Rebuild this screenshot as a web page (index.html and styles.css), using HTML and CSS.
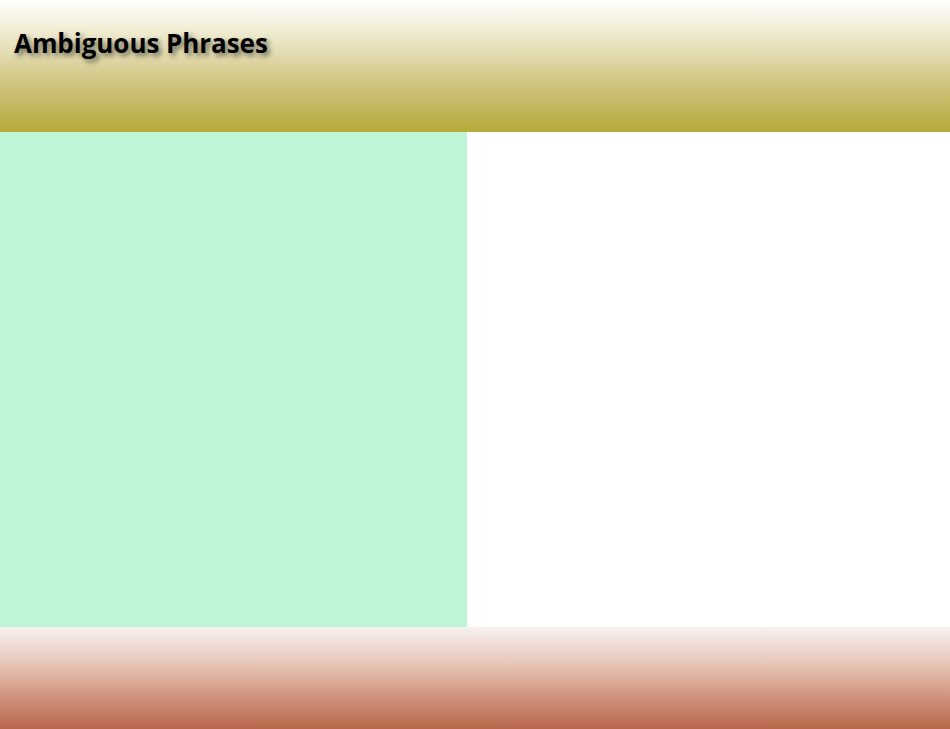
FILE: index.html
```html
<!DOCTYPE html>
<html>
<head>
<meta charset="utf-8">
<link rel="stylesheet" href="styles.css">
</head>
<body>
<div class="page">
  <header class="header"><h1 class="title">Ambiguous Phrases</h1></header>
  <main class="main">
    <section class="left"></section>
    <section class="right"></section>
  </main>
  <footer class="footer"></footer>
</div>
</body>
</html>
```

FILE: styles.css
```css
html, body { margin: 0; padding: 0; background: #fff; }
.page { width: 950px; height: 729px; display: flex; flex-direction: column; }
.header {
  height: 132px;
  background: linear-gradient(to bottom, #ffffff 0%, #ebe6c6 30%, #d2c786 60%, #b5aa3a 100%);
  box-sizing: border-box;
  padding: 27px 0 0 14px;
}
.title {
  margin: 0;
  font-family: "Open Sans", "Liberation Sans", sans-serif;
  font-weight: 700;
  font-size: 26px;
  letter-spacing: -0.05px;
  line-height: 32px;
  color: #000;
  text-shadow: 3px 3px 5px rgba(0,0,0,0.5);
}
.main { height: 495px; display: flex; }
.left { width: 467px; background: #bff5d7; }
.right { flex: 1; background: #fff; }
.footer {
  height: 102px;
  background: linear-gradient(to bottom, #f7f1ee 0%, #e6c6b8 35%, #cf917a 70%, #b8664a 100%);
}
```
